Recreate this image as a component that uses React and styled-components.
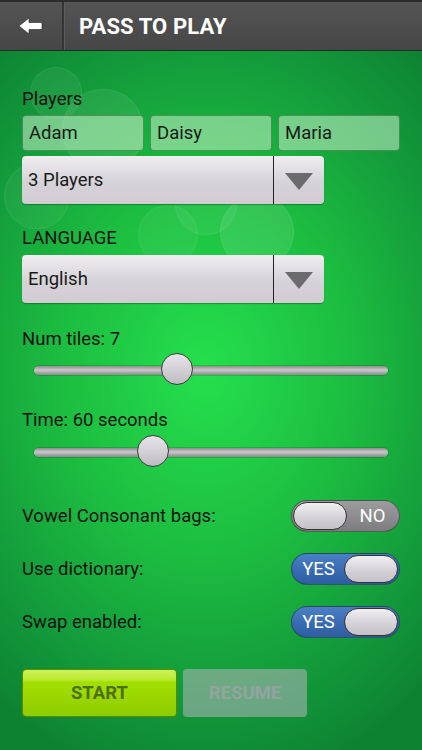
import React from "react";
import styled, { createGlobalStyle } from "styled-components";

const GlobalStyle = createGlobalStyle`
  html, body {
    margin: 0;
    padding: 0;
    background: #0f8a35;
  }
  body {
    font-family: Roboto, "Noto Sans", "Liberation Sans", sans-serif;
  }
`;

const Screen = styled.div`
  width: 422px;
  height: 750px;
  overflow: hidden;
  display: flex;
  flex-direction: column;
`;

// Barra de topo
const TopBar = styled.header`
  height: 48px;
  flex-shrink: 0;
  display: flex;
  align-items: stretch;
  background: linear-gradient(#545454, #464646);
  border-top: 2px solid #2c2c2c;
  border-bottom: 1px solid #2a2a2a;
`;

const BackButton = styled.div`
  width: 62px;
  display: flex;
  align-items: center;
  justify-content: center;
  border-right: 2px solid #353535;
  box-shadow: 1px 0 0 #5c5c5c;
`;

const Title = styled.h1`
  margin: 0 0 0 15px;
  align-self: center;
  color: #fff;
  font-size: 22px;
  font-weight: bold;
  letter-spacing: 0.1px;
`;

// Fundo verde com efeito radial
const Content = styled.main`
  flex: 1;
  position: relative;
  padding: 37px 22px 0 22px;
  background: radial-gradient(
    ellipse 330px 420px at 205px 320px,
    #25e04d 0%,
    #1cbc40 45%,
    #12973a 80%,
    #0d8332 100%
  );
  display: flex;
  flex-direction: column;
`;

const Bubble = styled.div`
  position: absolute;
  border-radius: 50%;
  background: rgba(255, 255, 255, ${(p) => p.$a || 0.08});
  border: 1px solid rgba(255, 255, 255, 0.06);
  pointer-events: none;
`;

const Label = styled.div`
  font-size: 18.5px;
  color: #111;
  line-height: 22px;
  position: relative;
  margin-top: ${(p) => p.$top || 0}px;
`;

const NameRow = styled.div`
  display: flex;
  gap: 6px;
  margin-top: 5px;
  position: relative;
`;

const NameBox = styled.div`
  width: ${(p) => p.$w}px;
  height: 36px;
  box-sizing: border-box;
  border: 1px solid rgba(40, 90, 50, 0.55);
  border-radius: 4px;
  background: rgba(200, 240, 200, 0.55);
  font-size: 18.5px;
  color: #1a1a1a;
  display: flex;
  align-items: center;
  padding-left: 6px;
`;

const Select = styled.div`
  width: 302px;
  height: 48px;
  box-sizing: border-box;
  margin-top: ${(p) => p.$top || 0}px;
  border-radius: 4px;
  background: linear-gradient(#f0eef1, #d6d3d8 55%, #d0ccd2);
  box-shadow: 0 1px 1px rgba(0, 0, 0, 0.3);
  display: flex;
  position: relative;
`;

const SelectText = styled.div`
  flex: 1;
  display: flex;
  align-items: center;
  padding-left: 6px;
  font-size: 18.5px;
  color: #1a1a1a;
  border-right: 1.5px solid #222;
`;

const SelectArrow = styled.div`
  width: 50px;
  display: flex;
  align-items: center;
  justify-content: center;
`;

const Triangle = styled.div`
  width: 0;
  height: 0;
  border-left: 14px solid transparent;
  border-right: 14px solid transparent;
  border-top: 17px solid #6b6b6d;
  margin-top: 3px;
`;

const SliderWrap = styled.div`
  position: relative;
  height: 34px;
  margin: ${(p) => p.$top || 0}px 12px 0 12px;
  display: flex;
  align-items: center;
`;

const Track = styled.div`
  width: 100%;
  height: 9px;
  border-radius: 5px;
  background: linear-gradient(#8d8d8d, #c9c9cb 45%, #8a8a8c);
  box-shadow: 0 0 0 0.5px rgba(0, 0, 0, 0.3);
`;

const Thumb = styled.div`
  position: absolute;
  top: 0;
  width: 32px;
  height: 32px;
  box-sizing: border-box;
  margin-left: -16px;
  border-radius: 50%;
  border: 1.5px solid #3c3c3c;
  background: linear-gradient(#e8e6ea, #cfccd2 60%, #bdbac0);
`;

const ToggleRow = styled.div`
  display: flex;
  align-items: center;
  justify-content: space-between;
  height: 32px;
  margin-top: ${(p) => p.$top || 0}px;
`;

const RowLabel = styled.span`
  font-size: 18.5px;
  color: #111;
`;

const Toggle = styled.div`
  width: 109px;
  height: 32px;
  box-sizing: border-box;
  border-radius: 16px;
  border: 1px solid rgba(30, 60, 40, 0.6);
  background: ${(p) =>
    p.$on
      ? "linear-gradient(#4a7fc6, #3669b0 60%, #2f5e9f)"
      : "linear-gradient(#9d9c9f, #8a898c 60%, #7c7b7e)"};
  display: flex;
  flex-direction: ${(p) => (p.$on ? "row" : "row-reverse")};
  align-items: center;
  padding: 1px;
`;

const ToggleText = styled.span`
  flex: 1;
  text-align: center;
  color: #fff;
  font-size: 18.5px;
`;

const Knob = styled.div`
  width: 54px;
  height: 28px;
  box-sizing: border-box;
  border-radius: 14px;
  border: 1.5px solid #333;
  background: linear-gradient(#f1eff2, #d3d0d5 60%, #c4c1c7);
`;

const ButtonRow = styled.div`
  display: flex;
  gap: 6px;
  margin-top: 31px;
`;

const StartButton = styled.div`
  width: 155px;
  height: 48px;
  box-sizing: border-box;
  border-radius: 4px;
  border: 1px solid #5f8a00;
  background: linear-gradient(#cdf25a 0%, #b8ea2e 22%, #a2df00 26%, #8fcc00 100%);
  display: flex;
  align-items: center;
  justify-content: center;
  font-size: 18.5px;
  font-weight: bold;
  color: #4d6f10;
`;

const ResumeButton = styled.div`
  width: 124px;
  height: 48px;
  border-radius: 4px;
  background: rgba(180, 180, 190, 0.55);
  display: flex;
  align-items: center;
  justify-content: center;
  font-size: 18.5px;
  font-weight: bold;
  color: rgba(175, 160, 185, 0.6);
`;

const BackArrow = () => (
  <svg width="26" height="18" viewBox="0 0 26 18">
    <path
      d="M1 9 L11 1 L11 5.5 L24 5.5 L24 12.5 L11 12.5 L11 17 Z"
      fill="#fff"
      stroke="#222"
      strokeWidth="0.6"
      strokeLinejoin="round"
    />
  </svg>
);

const Slider = ({ pos, top }) => (
  <SliderWrap $top={top}>
    <Track />
    <Thumb style={{ left: pos }} />
  </SliderWrap>
);

const Switch = ({ on }) => (
  <Toggle $on={on}>
    <ToggleText>{on ? "YES" : "NO"}</ToggleText>
    <Knob />
  </Toggle>
);

export default function App() {
  return (
    <Screen>
      <GlobalStyle />
      <TopBar>
        <BackButton>
          <BackArrow />
        </BackButton>
        <Title>PASS TO PLAY</Title>
      </TopBar>
      <Content>
        <Bubble style={{ left: 30, top: 16, width: 50, height: 50 }} $a={0.06} />
        <Bubble style={{ left: 62, top: 38, width: 80, height: 80 }} $a={0.07} />
        <Bubble style={{ left: 4, top: 112, width: 64, height: 64 }} $a={0.05} />
        <Bubble style={{ left: 138, top: 154, width: 58, height: 58 }} $a={0.05} />
        <Bubble style={{ left: 175, top: 122, width: 60, height: 60 }} $a={0.06} />
        <Bubble style={{ left: 220, top: 144, width: 72, height: 72 }} $a={0.1} />

        <Label>Players</Label>
        <NameRow>
          <NameBox $w={122}>Adam</NameBox>
          <NameBox $w={122}>Daisy</NameBox>
          <NameBox $w={122}>Maria</NameBox>
        </NameRow>
        <Select $top={5}>
          <SelectText>3 Players</SelectText>
          <SelectArrow>
            <Triangle />
          </SelectArrow>
        </Select>

        <Label $top={23}>LANGUAGE</Label>
        <Select $top={6}>
          <SelectText>English</SelectText>
          <SelectArrow>
            <Triangle />
          </SelectArrow>
        </Select>

        <Label $top={25}>Num tiles: 7</Label>
        <Slider pos={143} top={3} />

        <Label $top={22}>Time: 60 seconds</Label>
        <Slider pos={119} top={4} />

        <ToggleRow $top={31}>
          <RowLabel>Vowel Consonant bags:</RowLabel>
          <Switch on={false} />
        </ToggleRow>
        <ToggleRow $top={21}>
          <RowLabel>Use dictionary:</RowLabel>
          <Switch on />
        </ToggleRow>
        <ToggleRow $top={21}>
          <RowLabel>Swap enabled:</RowLabel>
          <Switch on />
        </ToggleRow>

        <ButtonRow>
          <StartButton>START</StartButton>
          <ResumeButton>RESUME</ResumeButton>
        </ButtonRow>
      </Content>
    </Screen>
  );
}
